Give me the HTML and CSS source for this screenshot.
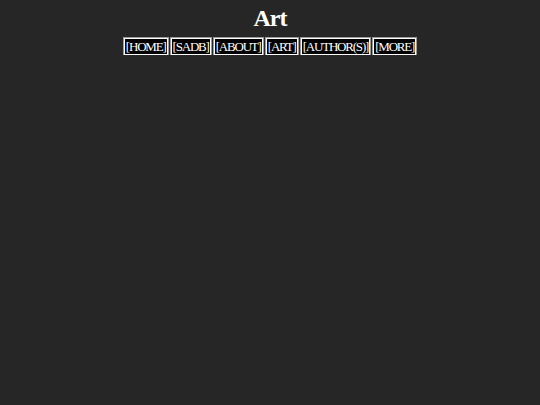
FILE: index.html
```html
<!DOCTYPE html>
<html>
<head>
<meta charset="utf-8">
<link rel="stylesheet" href="styles.css">
</head>
<body>
<h1 class="title">Art</h1>
<nav class="nav">
<a class="btn" href="#">[HOME]</a>
<a class="btn" href="#">[SADB]</a>
<a class="btn" href="#">[ABOUT]</a>
<a class="btn" href="#">[ART]</a>
<a class="btn" href="#">[AUTHOR(S)]</a>
<a class="btn" href="#">[MORE]</a>
</nav>
</body>
</html>
```
FILE: styles.css
```css
html, body {
  margin: 0;
  padding: 0;
  background: #262626;
  color: #fff;
  font-family: "Liberation Serif", "Times New Roman", serif;
}
body {
  padding-top: 4px;
}
.title {
  margin: 0;
  text-align: center;
  font-size: 24px;
  font-weight: bold;
  line-height: 28px;
  letter-spacing: -1px;
}
.nav {
  display: flex;
  justify-content: center;
  gap: 3px;
  margin-top: 6px;
}
.btn {
  display: block;
  background: #000;
  color: #fff;
  text-decoration: none;
  font-size: 13px;
  letter-spacing: -1.2px;
  line-height: 14px;
  padding: 1px 1px 0 1px;
  border: 1px solid #fff;
  box-shadow: 0 0 0 1px #9a9a9a;
}
```
